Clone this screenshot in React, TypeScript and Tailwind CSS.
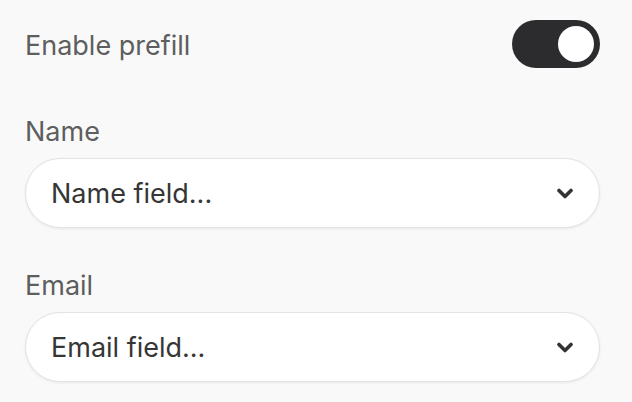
import React, { useState } from 'react';

const fields = [
  { label: 'Name', placeholder: 'Name field...' },
  { label: 'Email', placeholder: 'Email field...' },
];

const Chevron = () => (
  <svg width="16" height="11" viewBox="0 0 16 11" fill="none">
    <polyline
      points="2,2.5 8,8.5 14,2.5"
      stroke="#333333"
      strokeWidth="3.6"
      strokeLinecap="round"
      strokeLinejoin="round"
    />
  </svg>
);

const App = () => {
  const [prefill, setPrefill] = useState(true);

  return (
    <main className="h-screen w-full bg-[#f9f9f9] px-[25px] pt-[20px] font-['Inter','Noto_Sans',sans-serif]">
      <div className="flex h-[48px] w-[575px] items-center justify-between">
        <span className="pt-[3px] text-[27px] leading-[32px] text-[#5e5e5e]">Enable prefill</span>
        <button
          onClick={() => setPrefill(!prefill)}
          className={`flex h-[48px] w-[88px] items-center rounded-full px-[6px] ${prefill ? 'justify-end bg-[#2c2c2e]' : 'justify-start bg-[#d4d4d4]'}`}
        >
          <span className="block h-[36px] w-[36px] rounded-full bg-white" />
        </button>
      </div>

      <div className="mt-[48px] flex w-[575px] flex-col">
        {fields.map((f, i) => (
          <div key={f.label} className={i > 0 ? 'mt-[42px]' : ''}>
            <div className="text-[27px] leading-[32px] text-[#5e5e5e]">{f.label}</div>
            <div className="mt-[10px] flex h-[70px] items-center justify-between rounded-full border border-[#e3e3e3] bg-white pl-[25px] pr-[26px] shadow-[0_1px_3px_rgba(0,0,0,0.07)]">
              <span className="pt-[2px] text-[27px] leading-[32px] text-[#363636]">{f.placeholder}</span>
              <Chevron />
            </div>
          </div>
        ))}
      </div>
    </main>
  );
};

export default App;
